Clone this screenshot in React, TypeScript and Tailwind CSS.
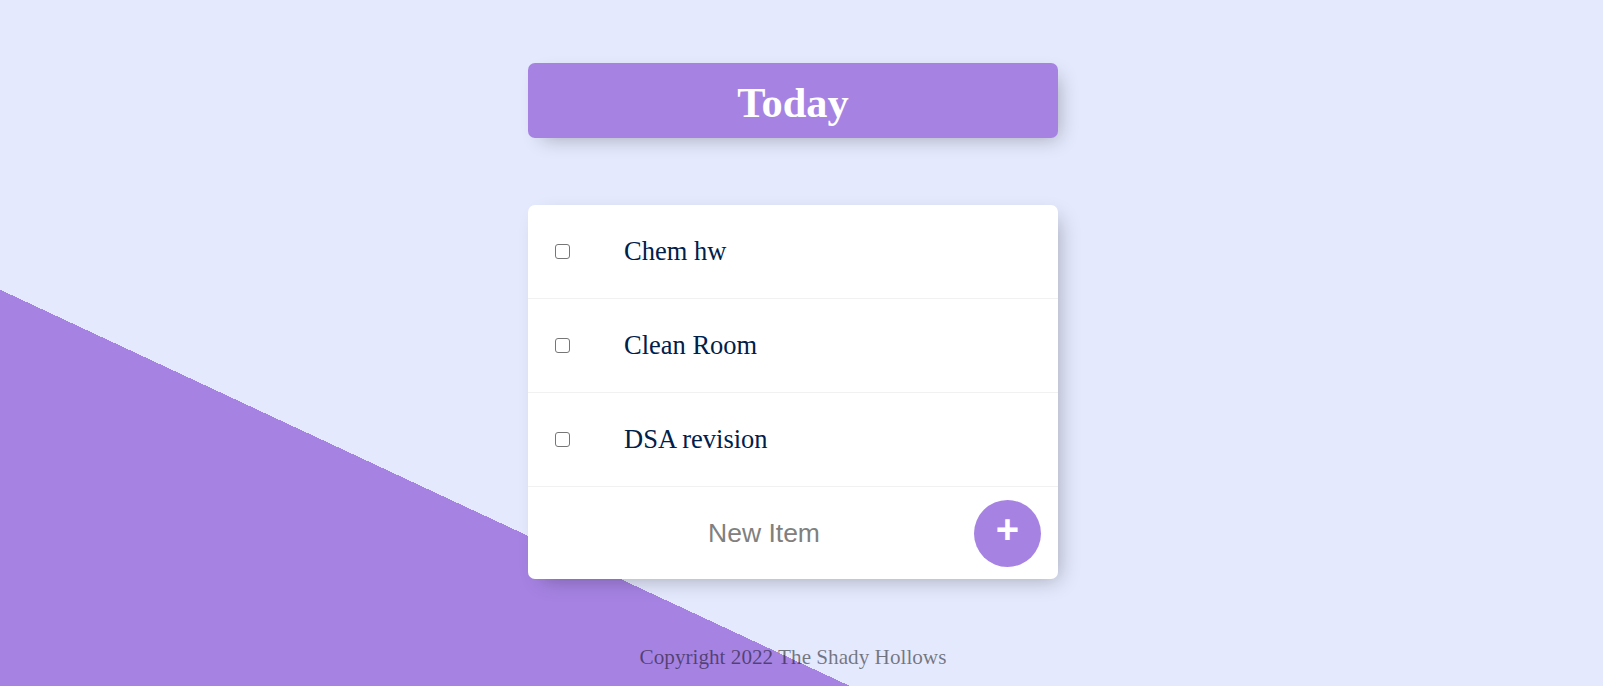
const items = ['Chem hw', 'Clean Room', 'DSA revision'];

function TodoItem({ label }: { label: string }) {
  return (
    <div className="flex h-[94px] items-center border-b border-[#F1F1F1]">
      <input
        type="checkbox"
        className="ml-[27px] h-[15px] w-[15px] shrink-0 appearance-none rounded-[3px] border border-[#767676] bg-white"
      />
      <p className="ml-[54px] text-[26.5px] leading-[normal] text-[#00204a]">{label}</p>
    </div>
  );
}

export default function App() {
  return (
    <div className="h-screen overflow-hidden bg-[#E4E9FD] bg-[linear-gradient(25deg,#A683E3_27.65%,#E4E9FD_27.65%)] font-['Liberation_Serif','Times_New_Roman',serif]">
      <div className="flex flex-col items-center pt-[63px] pr-[17px]">
        <div className="flex h-[75px] w-[530px] items-center justify-center rounded-[7px] bg-[#A683E3] pt-[6px] shadow-[7px_7px_20px_-7px_rgba(0,0,0,0.3)]">
          <h1 className="text-[42.4px] font-bold leading-none text-white">Today</h1>
        </div>

        <div className="mt-[67px] w-[530px] rounded-[7px] bg-white shadow-[7px_7px_20px_-7px_rgba(0,0,0,0.3)]">
          {items.map((item) => (
            <TodoItem key={item} label={item} />
          ))}
          <form className="flex h-[92px] items-center">
            <input
              type="text"
              placeholder="New Item"
              className="ml-[30.5px] h-[80px] w-[411px] bg-transparent text-center font-['Liberation_Sans',Arial,sans-serif] text-[26.5px] outline-none placeholder:text-[#808080]"
            />
            <button
              type="button"
              className="ml-[4.5px] flex h-[67px] w-[67px] items-center justify-center rounded-full bg-[#A683E3] pb-[8px] font-['Liberation_Sans',Arial,sans-serif] text-[40px] font-bold leading-none text-white"
            >
              +
            </button>
          </form>
        </div>

        <footer className="mt-[66px] text-center text-[21.2px] leading-[normal] text-black/50">
          Copyright 2022 The Shady Hollows
        </footer>
      </div>
    </div>
  );
}
